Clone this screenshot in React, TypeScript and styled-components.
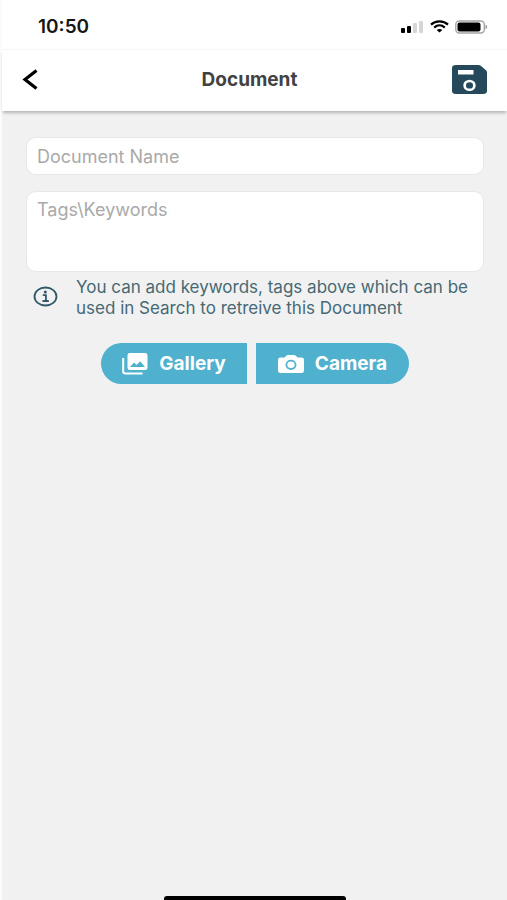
import React, { useState } from "react";
import styled, { createGlobalStyle } from "styled-components";

const GlobalStyle = createGlobalStyle`
  *, *::before, *::after { box-sizing: border-box; }
  body { margin: 0; background: #f1f1f1; }
  body, button, input, textarea { font-family: Inter, "Liberation Sans", sans-serif; }
  svg { display: block; flex-shrink: 0; }
`;

const Screen = styled.div`
  display: flex;
  flex-direction: column;
  min-height: 100vh;
  border-left: 2px solid #fbfbfb;
  background: #f1f1f1;
`;

const StatusBar = styled.div`
  display: flex;
  align-items: center;
  justify-content: space-between;
  height: 49px;
  padding: 4px 19px 0 36px;
  background: #fff;
`;

const Clock = styled.time`
  font-size: 19px;
  line-height: 24px;
  font-weight: 600;
  color: #161616;
`;

const StatusIcons = styled.div`
  display: flex;
  align-items: center;
  gap: 6px;
`;

const Header = styled.header`
  display: grid;
  grid-template-columns: 54px 1fr 64px;
  align-items: center;
  height: 62px;
  padding: 0 16px 2px;
  background: #fff;
  border-top: 1px solid #f7f7f7;
  box-shadow: 0 3px 3px -1px rgba(0, 0, 0, 0.25);
`;

const Title = styled.h1`
  margin: 0;
  text-align: center;
  font-size: 19px;
  line-height: 24px;
  font-weight: 700;
  color: #424242;
`;

const IconButton = styled.button<{ $end?: boolean }>`
  display: flex;
  justify-self: ${({ $end }) => ($end ? "end" : "start")};
  padding: 4px ${({ $end }) => ($end ? "4px" : "3px")};
  border: 0;
  background: none;
  cursor: pointer;
`;

const Form = styled.form`
  display: flex;
  flex-direction: column;
  padding: 26px 23px 0 24px;
`;

const fieldStyles = `
  display: block;
  width: 100%;
  padding: 7px 10px;
  border: 1px solid #e8e8e8;
  border-radius: 10px;
  background: #fff;
  color: #333;
  font-size: 18px;
  line-height: 22px;
  outline: none;
  &::placeholder { color: #a9a9a9; opacity: 1; }
`;

const NameInput = styled.input`
  ${fieldStyles}
  height: 38px;
`;

const TagsInput = styled.textarea`
  ${fieldStyles}
  height: 81px;
  margin-top: 16px;
  resize: none;
`;

const Hint = styled.div`
  display: flex;
  align-items: flex-start;
  gap: 18px;
  margin-top: 5px;
  padding-left: 7px;
`;

const HintIcon = styled.span`
  padding-top: 9px;
`;

const HintText = styled.p`
  margin: 0;
  font-size: 17px;
  line-height: 21px;
  color: #466974;
`;

const Actions = styled.div`
  display: flex;
  justify-content: center;
  gap: 9px;
  margin-top: 24px;
`;

const ActionButton = styled.button<{ $side: "left" | "right" }>`
  display: flex;
  align-items: center;
  justify-content: center;
  gap: 11px;
  min-width: ${({ $side }) => ($side === "left" ? "146px" : "153px")};
  height: 41px;
  padding: 0 20px;
  border: 0;
  border-radius: ${({ $side }) => ($side === "left" ? "21px 0 0 21px" : "0 21px 21px 0")};
  background: #4fb1ce;
  color: #fff;
  font-size: 19px;
  line-height: 24px;
  font-weight: 700;
  cursor: pointer;
`;

const HomeIndicator = styled.div`
  align-self: center;
  width: 182px;
  height: 4px;
  margin-top: auto;
  border-radius: 3px 3px 0 0;
  background: #000;
`;

const SignalIcon = () => (
  <svg width="24" height="14" viewBox="0 0 24 14" aria-hidden="true">
    <rect x="1" y="8" width="4" height="5" rx="1" fill="#000" />
    <rect x="7" y="6" width="4" height="7" rx="1" fill="#000" />
    <rect x="13" y="3" width="4" height="10" rx="1" fill="#d6d6d6" />
    <rect x="19" y="1" width="4" height="12" rx="1" fill="#d6d6d6" />
  </svg>
);

const WifiIcon = () => (
  <svg width="19" height="13" viewBox="0 0 19 13" fill="none" stroke="#000" strokeWidth="2.2" aria-hidden="true">
    <path d="M1 4.6C5.6.2 13.4.2 18 4.6" />
    <path d="M4.2 7.6C7.3 4.7 11.7 4.7 14.8 7.6" />
    <path d="M9.5 12.6 6.7 10.1C8.3 8.6 10.7 8.6 12.3 10.1Z" fill="#000" stroke="none" />
  </svg>
);

const BatteryIcon = () => (
  <svg width="33" height="14" viewBox="0 0 33 14" aria-hidden="true">
    <rect x="0.8" y="1" width="28.5" height="12" rx="3.5" fill="#fff" stroke="#a5a5a5" strokeWidth="1.4" />
    <rect x="2.5" y="2.5" width="23" height="9" rx="2" fill="#000" />
    <path d="M30.5 4.8c2.2.6 2.2 3.8 0 4.4Z" fill="#999" />
  </svg>
);

const BackIcon = () => (
  <svg width="18" height="22" viewBox="0 0 18 22" fill="none" stroke="#000" strokeWidth="3.2" aria-hidden="true">
    <path d="M15.5 1.5 4 10.5l11.5 9" />
  </svg>
);

const SaveIcon = () => (
  <svg width="35" height="29" viewBox="0 0 35 29" aria-hidden="true">
    <path
      fill="#25495b"
      fillRule="evenodd"
      d="M4 0H26.5Q27.8 0 28.7.8L34 5.2Q35 6 35 7.2V25.8Q35 29 31 29H4Q0 29 0 25.8V3.2Q0 0 4 0ZM6 5V9.5H21.5V5ZM17.5 14.7A6.2 5.7 0 1 0 17.5 26.1A6.2 5.7 0 1 0 17.5 14.7Z"
    />
    <ellipse cx="17.5" cy="20.4" rx="3.5" ry="3.2" fill="#25495b" />
  </svg>
);

const InfoIcon = () => (
  <svg width="25" height="21" viewBox="0 0 25 21" fill="none" stroke="#2f5968" aria-hidden="true">
    <ellipse cx="12.5" cy="10.5" rx="11" ry="9" strokeWidth="1.8" />
    <circle cx="12.3" cy="6" r="1.5" fill="#2f5968" stroke="none" />
    <path d="M9.8 9.2H12.9V14.8M9.5 15H15.8" strokeWidth="1.8" />
  </svg>
);

const GalleryIcon = () => (
  <svg width="26" height="22" viewBox="0 0 26 22" aria-hidden="true">
    <path d="M1.2 5V18.5Q1.2 20.5 3.5 20.5H20.5" fill="none" stroke="#fff" strokeWidth="2" />
    <path
      fill="#fff"
      fillRule="evenodd"
      d="M8 0H23Q25.5 0 25.5 2.2V14.8Q25.5 17 23 17H8Q5.5 17 5.5 14.8V2.2Q5.5 0 8 0ZM8 14H23L18.2 8.2L14.6 12L12 9.6Z"
    />
  </svg>
);

const CameraIcon = () => (
  <svg width="26" height="18" viewBox="0 0 26 18" aria-hidden="true">
    <path
      fill="#fff"
      d="M2.5 2.5H6.5L8.2.8Q9 0 10 0H16Q17 0 17.8.8L19.5 2.5H23.5Q26 2.5 26 4.8V15.7Q26 18 23.5 18H2.5Q0 18 0 15.7V4.8Q0 2.5 2.5 2.5Z"
    />
    <ellipse cx="13" cy="9.8" rx="4.6" ry="4.2" fill="none" stroke="#4fb1ce" strokeWidth="1.8" />
  </svg>
);

export default function App() {
  const [name, setName] = useState("");
  const [tags, setTags] = useState("");

  return (
    <>
      <GlobalStyle />
      <Screen>
        <StatusBar>
          <Clock>10:50</Clock>
          <StatusIcons>
            <SignalIcon />
            <WifiIcon />
            <BatteryIcon />
          </StatusIcons>
        </StatusBar>
        <Header>
          <IconButton type="button" aria-label="Back">
            <BackIcon />
          </IconButton>
          <Title>Document</Title>
          <IconButton $end type="submit" form="document-form" aria-label="Save">
            <SaveIcon />
          </IconButton>
        </Header>
        <Form id="document-form" onSubmit={(event) => event.preventDefault()}>
          <NameInput
            aria-label="Document Name"
            placeholder="Document Name"
            value={name}
            onChange={(event) => setName(event.target.value)}
          />
          <TagsInput
            aria-label="Tags and keywords"
            aria-describedby="tags-hint"
            placeholder="Tags\Keywords"
            value={tags}
            onChange={(event) => setTags(event.target.value)}
          />
          <Hint>
            <HintIcon>
              <InfoIcon />
            </HintIcon>
            <HintText id="tags-hint">
              You can add keywords, tags above which can be used in Search to retreive this Document
            </HintText>
          </Hint>
          <Actions>
            <ActionButton type="button" $side="left">
              <GalleryIcon />
              Gallery
            </ActionButton>
            <ActionButton type="button" $side="right">
              <CameraIcon />
              Camera
            </ActionButton>
          </Actions>
        </Form>
        <HomeIndicator />
      </Screen>
    </>
  );
}
